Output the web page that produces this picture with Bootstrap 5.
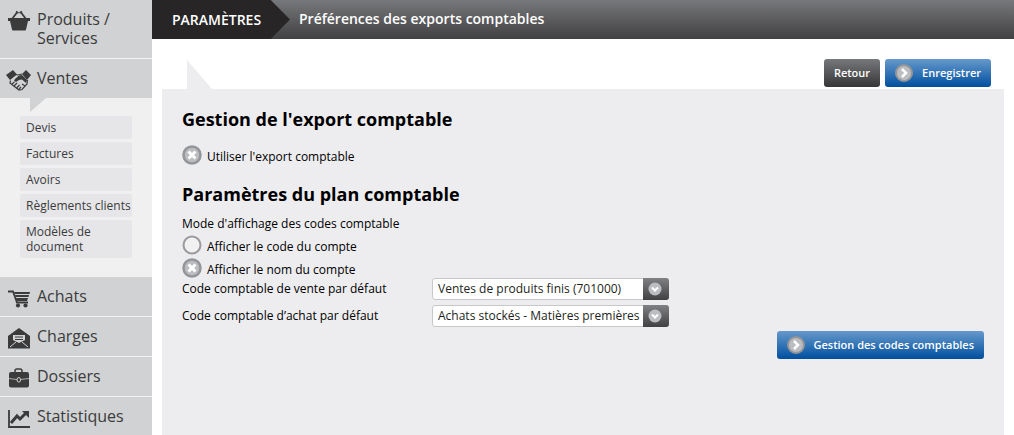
<!DOCTYPE html>
<html lang="fr">
<head>
<meta charset="utf-8">
<meta name="viewport" content="width=device-width, initial-scale=1">
<title>Préférences des exports comptables</title>
<link rel="stylesheet" href="https://cdn.jsdelivr.net/npm/bootstrap@5.3.0/dist/css/bootstrap.min.css">
<style>
body { font: 12px/16px "Open Sans", "Noto Sans", sans-serif; color: #000; background: #fff; }
.sidebar { width: 152px; background: #f0f0f0; }
.side-link { gap: 6px; padding: 10px 8px 10px 6px; font-size: 16px; line-height: 19px; color: #3b3b3c; background: #d0d2d3; text-decoration: none; border-bottom: 1px solid #f4f4f4; }
.side-link.open { border-bottom: 0; }
.side-link.final { border-bottom: 0; padding-bottom: 9px; }
.side-link svg { width: 25px; height: 23px; margin-bottom: -4px; fill: #3b3b3c; }
.submenu { padding: 18px 20px 19px; gap: 3px; }
.submenu::before { content: ""; left: 30px; top: 0; width: 16px; height: 14px; background: #d0d2d3; clip-path: polygon(0 0, 100% 0, 0 100%); position: absolute; }
.sub-link { display: block; padding: 4px 6px; line-height: 15px; color: #3b3b3c; background: #e6e6e8; border-radius: 2px; text-decoration: none; }
.topbar { height: 39px; background: linear-gradient(#77787b, #414042); color: #fff; font-size: 14px; font-weight: 600; }
.crumb { width: 138px; padding-left: 20px; background: #272526; clip-path: polygon(0 0, 86% 0, 100% 50%, 86% 100%, 0 100%); }
.crumb-title { padding-left: 9px; font-size: 14px; font-weight: 600; }
.content-area { padding: 0 10px; }
.actions { padding: 20px 13px 2px; gap: 5px; }
.cmd { height: 28px; padding: 0 10px; gap: 9px; border: 0; border-radius: 3px; color: #fff; font-size: 11px; font-weight: 600; line-height: 28px; }
.cmd:hover { color: #fff; }
.cmd svg { width: 18px; height: 18px; }
.cmd-blue { background: linear-gradient(#6699cb, #004f9f); }
.cmd-dark { background: linear-gradient(#77787b, #363638); }
.panel { background: #ededef; padding: 18px 20px 20px; }
.panel::before { content: ""; position: absolute; left: 25px; top: -29px; width: 25px; height: 29px; background: #ededef; clip-path: polygon(0 0, 100% 100%, 0 100%); }
.panel h2 { font-size: 18px; line-height: 24px; font-weight: 700; margin: 0; }
.choice { height: 23px; gap: 5px; }
.choice label { padding-top: 4px; }
.choice-lone { margin: 12px 0 16px; }
.choice-set { margin: 1px 0 -4px; }
.mode-title { margin-top: 10px; }
.codes-link { margin-top: 2px; }
.choice input { appearance: none; width: 20px; height: 20px; margin: 0; background: url("data:image/svg+xml,%3Csvg xmlns='http://www.w3.org/2000/svg' viewBox='0 0 20 20'%3E%3Ccircle cx='10' cy='10' r='8.5' fill='%23f1f1f2' stroke='%23999a9d' stroke-width='2'/%3E%3C/svg%3E"); }
.choice input:checked { background-image: url("data:image/svg+xml,%3Csvg xmlns='http://www.w3.org/2000/svg' viewBox='0 0 20 20'%3E%3Ccircle cx='10' cy='10' r='8.5' fill='%23bcbdc0' stroke='%23939598' stroke-width='2.5'/%3E%3Cpath d='M6.5 6.5l7 7M13.5 6.5l-7 7' stroke='%23fff' stroke-width='3'/%3E%3C/svg%3E"); }
.field-row { height: 27px; }
.field-row label { width: 250px; }
.pick { width: 237px; height: 22px; border-radius: 3px; }
.pick select { appearance: none; width: 100%; height: 22px; padding: 0 26px 0 5px; border: 1px solid #c7c8ca; border-radius: 3px; background: #fff; color: #231f20; font-size: 12px; line-height: 20px; }
.pick-arrow { position: absolute; right: 0; top: 0; width: 26px; height: 22px; pointer-events: none; border-radius: 0 3px 3px 0; background: linear-gradient(#808184, #414042); }
.pick-arrow svg { display: block; margin: 4px 5px; width: 14px; height: 14px; }
</style>
</head>
<body>
<div class="d-flex min-vh-100">
  <nav class="sidebar flex-shrink-0" aria-label="Menu principal">
    <a class="side-link d-flex" href="#"><svg class="flex-shrink-0" viewBox="-1 0 25 23"><path d="M1 8h22v3h-2l-2 8.500q0 1-1 1H6q-1 0-1-1L3 11H1z"/><path d="M5 9l5-6.500M19 9l-5-6.500" fill="none" stroke="#3b3b3c" stroke-width="1.800"/><path d="M9 1.500l2.500 1.500M15 1.500l-2.500 1.500" stroke="#3b3b3c" stroke-width="1.500"/></svg><span>Produits / Services</span></a>
    <a class="side-link open d-flex" href="#"><svg class="flex-shrink-0" viewBox="0 0 25 23"><path d="M0 6l7-5 4 4.500-7 5.500zM16 5l4-4 5 5-4 5z"/><path d="M4.500 11.500L4 14l9 7 3-.5 5-5.500.5-4M10 5.500l2 .5 4-1" fill="none" stroke="#3b3b3c" stroke-width="1.200"/><path d="M9 10l4-3.500 3-.5 5 5-1 3-4-3.500-3 .5-3 2-2-1z"/><path d="M6 15l2.500-2M8 17l3-3M10.500 19l3-3M13 20l2-2M16 15l3 2" stroke="#3b3b3c" stroke-width="1.200"/></svg><span>Ventes</span></a>
    <div class="submenu position-relative d-flex flex-column">
      <a class="sub-link" href="#">Devis</a>
      <a class="sub-link" href="#">Factures</a>
      <a class="sub-link" href="#">Avoirs</a>
      <a class="sub-link text-nowrap" href="#">Règlements clients</a>
      <a class="sub-link" href="#">Modèles de document</a>
    </div>
    <a class="side-link d-flex" href="#"><svg class="flex-shrink-0" viewBox="-1 1 25 23"><path d="M1 5.500h5l4 11h11" fill="none" stroke="#3b3b3c" stroke-width="1.800"/><path d="M7 6h16l-.5 2H8zM8 9h14l-.5 2H9zM9 12h12l-1 3H10z"/><circle cx="11" cy="19.500" r="2.100"/><circle cx="18.500" cy="19.500" r="2.100"/></svg><span>Achats</span></a>
    <a class="side-link d-flex" href="#"><svg class="flex-shrink-0" viewBox="-1 0 25 23"><path d="M1 9l11-8 11 8v12.500H1z"/><path d="M6 8h12v5l-6 3-6-3z" fill="#d0d2d3"/><path d="M8 10h8M8 12.500h8" stroke="#3b3b3c"/><path d="M3 20l6-5M21 20l-6-5" stroke="#d0d2d3"/></svg><span>Charges</span></a>
    <a class="side-link d-flex" href="#"><svg class="flex-shrink-0" viewBox="-1 0 25 23"><path d="M8 6V4q0-2 2-2h3q2 0 2 2v2" fill="none" stroke="#3b3b3c" stroke-width="1.500"/><rect x="2" y="5" width="20" height="15.500" rx="2"/><path d="M2 11.500q9 2.500 20 0" fill="none" stroke="#a8a9ab"/><ellipse cx="11.800" cy="12.800" rx="1.800" ry="2.300" stroke="#d0d2d3"/></svg><span>Dossiers</span></a>
    <a class="side-link final d-flex" href="#"><svg class="flex-shrink-0" viewBox="-1 0 25 23"><path d="M2 3v17h21" fill="none" stroke="#3b3b3c" stroke-width="1.800"/><path d="M4 16l6-7 3 3 6-6" fill="none" stroke="#3b3b3c" stroke-width="3"/><path d="M15 4h7v7z"/></svg><span>Statistiques</span></a>
  </nav>
  <div class="flex-grow-1 d-flex flex-column">
    <header class="topbar d-flex">
      <div class="crumb d-flex align-items-center">PARAMÈTRES</div>
      <h1 class="crumb-title d-flex align-items-center m-0">Préférences des exports comptables</h1>
    </header>
    <main class="content-area flex-grow-1 d-flex flex-column">
      <div class="actions d-flex justify-content-end">
        <button type="button" class="btn cmd cmd-dark">Retour</button>
        <button type="submit" form="prefs" class="btn cmd cmd-blue d-flex align-items-center"><svg viewBox="0 0 18 18"><circle cx="9" cy="9" r="8" fill="#bcbdc0" stroke="#939598" stroke-width="2"/><path d="M7 5l4 4-4 4" fill="none" stroke="#fff" stroke-width="2.500"/></svg>Enregistrer</button>
      </div>
      <form id="prefs" class="panel position-relative flex-grow-1">
        <h2>Gestion de l'export comptable</h2>
        <div class="choice choice-lone d-flex align-items-center"><input type="checkbox" id="use" checked><label for="use">Utiliser l'export comptable</label></div>
        <h2>Paramètres du plan comptable</h2>
        <div class="mode-title" id="mode">Mode d'affichage des codes comptable</div>
        <div class="choice-set" role="radiogroup" aria-labelledby="mode">
          <div class="choice d-flex align-items-center"><input type="radio" name="mode" id="m1"><label for="m1">Afficher le code du compte</label></div>
          <div class="choice d-flex align-items-center"><input type="radio" name="mode" id="m2" checked><label for="m2">Afficher le nom du compte</label></div>
        </div>
        <div class="field-row d-flex align-items-center"><label for="sale">Code comptable de vente par défaut</label>
          <div class="pick position-relative"><select id="sale"><option>Ventes de produits finis (701000)</option></select><span class="pick-arrow"><svg viewBox="0 0 14 14"><circle cx="7" cy="7" r="6.500" fill="#bcbdc0"/><path d="M4 5.500l3 3 3-3" fill="none" stroke="#fff" stroke-width="2"/></svg></span></div></div>
        <div class="field-row d-flex align-items-center"><label for="buy">Code comptable d’achat par défaut</label>
          <div class="pick position-relative"><select id="buy"><option>Achats stockés - Matières premières (</option></select><span class="pick-arrow"><svg viewBox="0 0 14 14"><circle cx="7" cy="7" r="6.500" fill="#bcbdc0"/><path d="M4 5.500l3 3 3-3" fill="none" stroke="#fff" stroke-width="2"/></svg></span></div></div>
        <div class="codes-link d-flex justify-content-end"><button type="button" class="btn cmd cmd-blue d-flex align-items-center"><svg viewBox="0 0 18 18"><circle cx="9" cy="9" r="8" fill="#bcbdc0" stroke="#939598" stroke-width="2"/><path d="M7 5l4 4-4 4" fill="none" stroke="#fff" stroke-width="2.500"/></svg>Gestion des codes comptables</button></div>
      </form>
    </main>
  </div>
</div>
<script src="https://cdn.jsdelivr.net/npm/bootstrap@5.3.0/dist/js/bootstrap.bundle.min.js"></script>
</body>
</html>
